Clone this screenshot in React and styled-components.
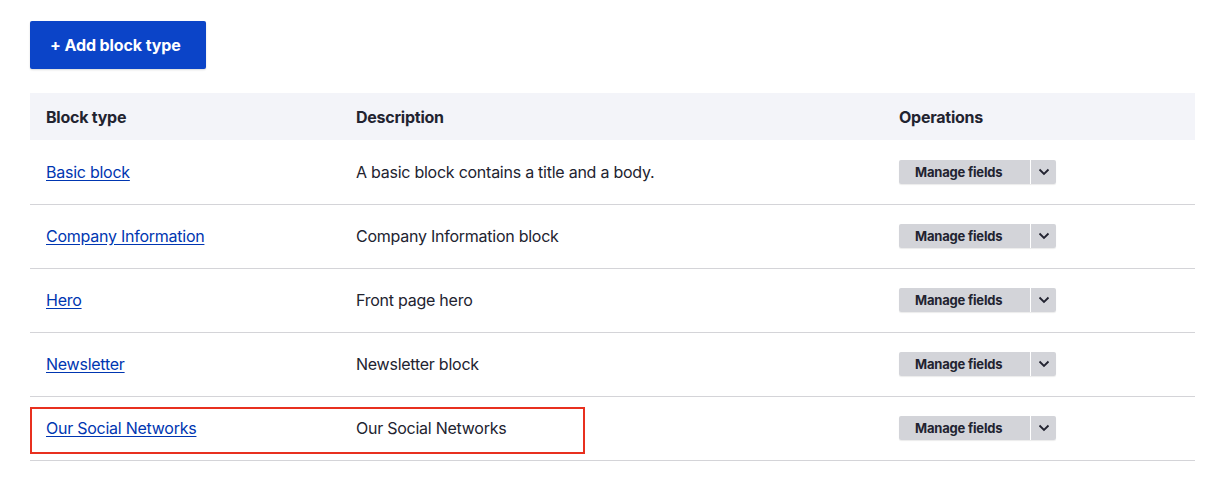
import React from 'react';
import styled, { createGlobalStyle } from 'styled-components';

const GlobalStyle = createGlobalStyle`
  body {
    margin: 0;
    background: #fff;
    font-family: Inter, "Liberation Sans", Arial, sans-serif;
    color: #222330;
  }
`;

const rows = [
  { name: 'Basic block', description: 'A basic block contains a title and a body.' },
  { name: 'Company Information', description: 'Company Information block' },
  { name: 'Hero', description: 'Front page hero' },
  { name: 'Newsletter', description: 'Newsletter block' },
  { name: 'Our Social Networks', description: 'Our Social Networks', highlighted: true },
];

function App() {
  return (
    <Page>
      <GlobalStyle />
      <AddButton>+ Add block type</AddButton>
      <Table>
        <thead>
          <tr>
            <HeadCell $width={310}>Block type</HeadCell>
            <HeadCell $width={543}>Description</HeadCell>
            <HeadCell>Operations</HeadCell>
          </tr>
        </thead>
        <tbody>
          {rows.map((row) => (
            <Row key={row.name}>
              <Cell>
                {row.highlighted && <Highlight />}
                <Link href="#">{row.name}</Link>
              </Cell>
              <Cell>{row.description}</Cell>
              <Cell>
                <SplitButton>
                  <MainAction>Manage fields</MainAction>
                  <Toggle>
                    <svg width="12" height="8" viewBox="0 0 12 8" fill="none">
                      <path d="M1.5 1.5L6 6L10.5 1.5" stroke="#222330" strokeWidth="1.8" />
                    </svg>
                  </Toggle>
                </SplitButton>
              </Cell>
            </Row>
          ))}
        </tbody>
      </Table>
    </Page>
  );
}

export default App;

const Page = styled.div`
  padding: 21px 29px 0 30px;
`;

const AddButton = styled.button`
  display: block;
  height: 48px;
  width: 176px;
  padding: 0 0 0 20px;
  text-align: left;
  border: 0;
  border-radius: 2px;
  background: #0b44c8;
  color: #fff;
  font-family: inherit;
  font-size: 16px;
  font-weight: 700;
  letter-spacing: -0.1px;
  box-shadow: 0 1px 2px rgba(0, 0, 0, 0.15);
  cursor: pointer;
`;

const Table = styled.table`
  width: 1165px;
  margin-top: 24px;
  border-collapse: collapse;
  font-size: 16px;
  letter-spacing: -0.25px;
`;

const HeadCell = styled.th`
  width: ${(p) => (p.$width ? `${p.$width}px` : 'auto')};
  height: 47px;
  padding: 0 16px;
  box-sizing: border-box;
  background: #f3f4f9;
  text-align: left;
  font-weight: 700;
  color: #222330;
`;

const Row = styled.tr`
  border-bottom: 1px solid #d4d4d8;
`;

const Cell = styled.td`
  position: relative;
  height: 64px;
  padding: 0 16px;
  box-sizing: border-box;
  vertical-align: middle;
  color: #222330;
`;

const Highlight = styled.div`
  position: absolute;
  left: 0;
  top: 10px;
  width: 555px;
  height: 47px;
  box-sizing: border-box;
  border: 2px solid #e8301f;
  pointer-events: none;
`;

const Link = styled.a`
  color: #0036b1;
  text-decoration: underline;
  text-underline-offset: 2px;
`;

const SplitButton = styled.div`
  display: inline-flex;
  height: 24px;
  border-radius: 2px;
  overflow: hidden;
  box-shadow: 0 1px 1px rgba(0, 0, 0, 0.08);
`;

const MainAction = styled.button`
  width: 131px;
  border: 0;
  background: #d3d4d9;
  color: #222330;
  font-family: inherit;
  font-size: 13px;
  font-weight: 700;
  letter-spacing: -0.2px;
  text-align: left;
  padding: 0 0 0 16px;
`;

const Toggle = styled.button`
  width: 26px;
  border: 0;
  border-left: 1px solid #fff;
  background: #d3d4d9;
  display: flex;
  align-items: center;
  justify-content: center;
  padding: 0;
`;
